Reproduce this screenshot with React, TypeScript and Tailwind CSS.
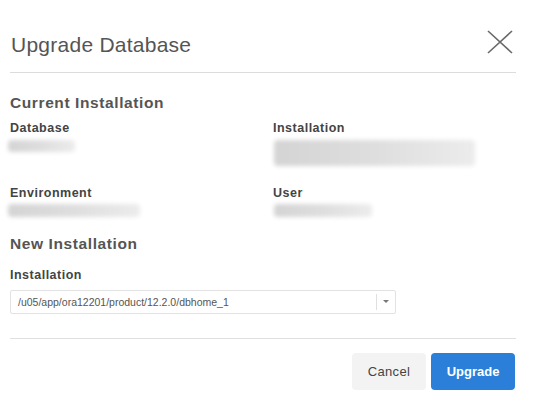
import React from "react";

function Bar({ w, h }: { w: string; h: string }) {
  return (
    <div
      className={`${w} ${h} bg-gradient-to-r from-[#d4d4d4] via-[#dedede] to-[#ececec] blur-[2px] rounded-sm`}
    />
  );
}

const label = "text-[12.5px] leading-[16px] font-bold text-[#444] tracking-[0.5px]";
const heading = "text-[15.5px] leading-[20px] font-bold text-[#555] tracking-[0.6px]";

export default function App() {
  return (
    <div
      className="w-[548px] h-[402px] bg-white overflow-hidden"
      style={{ fontFamily: '"Liberation Sans", Arial, sans-serif' }}
    >
      <div className="ml-[10px] w-[506px]">
        {/* header */}
        <div className="flex items-start justify-between border-b border-[#dcdcdc] pt-[32px] pb-[14px]">
          <div className="text-[21px] leading-[26px] text-[#555] pl-[1px] tracking-[0.25px]">Upgrade Database</div>
          <svg width="26" height="24" viewBox="0 0 26 24" className="mr-[3px] -mt-[2px]">
            <path d="M1 1 L25 23 M25 1 L1 23" stroke="#6a6a6a" strokeWidth="1.6" fill="none" />
          </svg>
        </div>

        {/* current installation */}
        <div className={`mt-[20px] ${heading}`}>Current Installation</div>
        <div className="mt-[7px] grid grid-cols-[263px_1fr] grid-rows-[65px_auto]">
          <div className="flex flex-col gap-[4px]">
            <div className={label}>Database</div>
            <div className="-ml-[2px]"><Bar w="w-[67px]" h="h-[12px]" /></div>
          </div>
          <div className="flex flex-col gap-[4px]">
            <div className={label}>Installation</div>
            <div className="ml-[1px]"><Bar w="w-[201px]" h="h-[26px]" /></div>
          </div>
          <div className="flex flex-col gap-[3px]">
            <div className={label}>Environment</div>
            <div className="-ml-[2px]"><Bar w="w-[132px]" h="h-[13px]" /></div>
          </div>
          <div className="flex flex-col gap-[3px]">
            <div className={label}>User</div>
            <div className="ml-[1px]"><Bar w="w-[98px]" h="h-[13px]" /></div>
          </div>
        </div>

        {/* new installation */}
        <div className={`mt-[17px] ${heading}`}>New Installation</div>
        <div className={`mt-[13px] ${label}`}>Installation</div>
        <div className="mt-[7px] w-[386px] h-[24px] border border-[#e2e2e2] rounded-[2px] flex items-center">
          <div className="flex-1 pl-[7px] text-[10.5px] text-[#555] leading-[14px]">
            /u05/app/ora12201/product/12.2.0/dbhome_1
          </div>
          <div className="w-px h-[16px] bg-[#e0e0e0]" />
          <div className="w-[18px] flex items-center justify-center">
            <svg width="6" height="4" viewBox="0 0 6 4">
              <path d="M0 0 L6 0 L3 3 Z" fill="#777" />
            </svg>
          </div>
        </div>

        {/* footer */}
        <div className="mt-[24px] border-t border-[#e0e0e0]" />
        <div className="mt-[14px] flex justify-end gap-[5px] pr-[1px]">
          <button className="w-[74px] h-[37px] rounded-[4px] bg-[#f3f3f3] text-[13px] text-[#444] tracking-[0.3px]">
            Cancel
          </button>
          <button className="w-[84px] h-[37px] rounded-[4px] bg-[#2b7fd8] text-[13px] font-bold text-white">
            Upgrade
          </button>
        </div>
      </div>
    </div>
  );
}
